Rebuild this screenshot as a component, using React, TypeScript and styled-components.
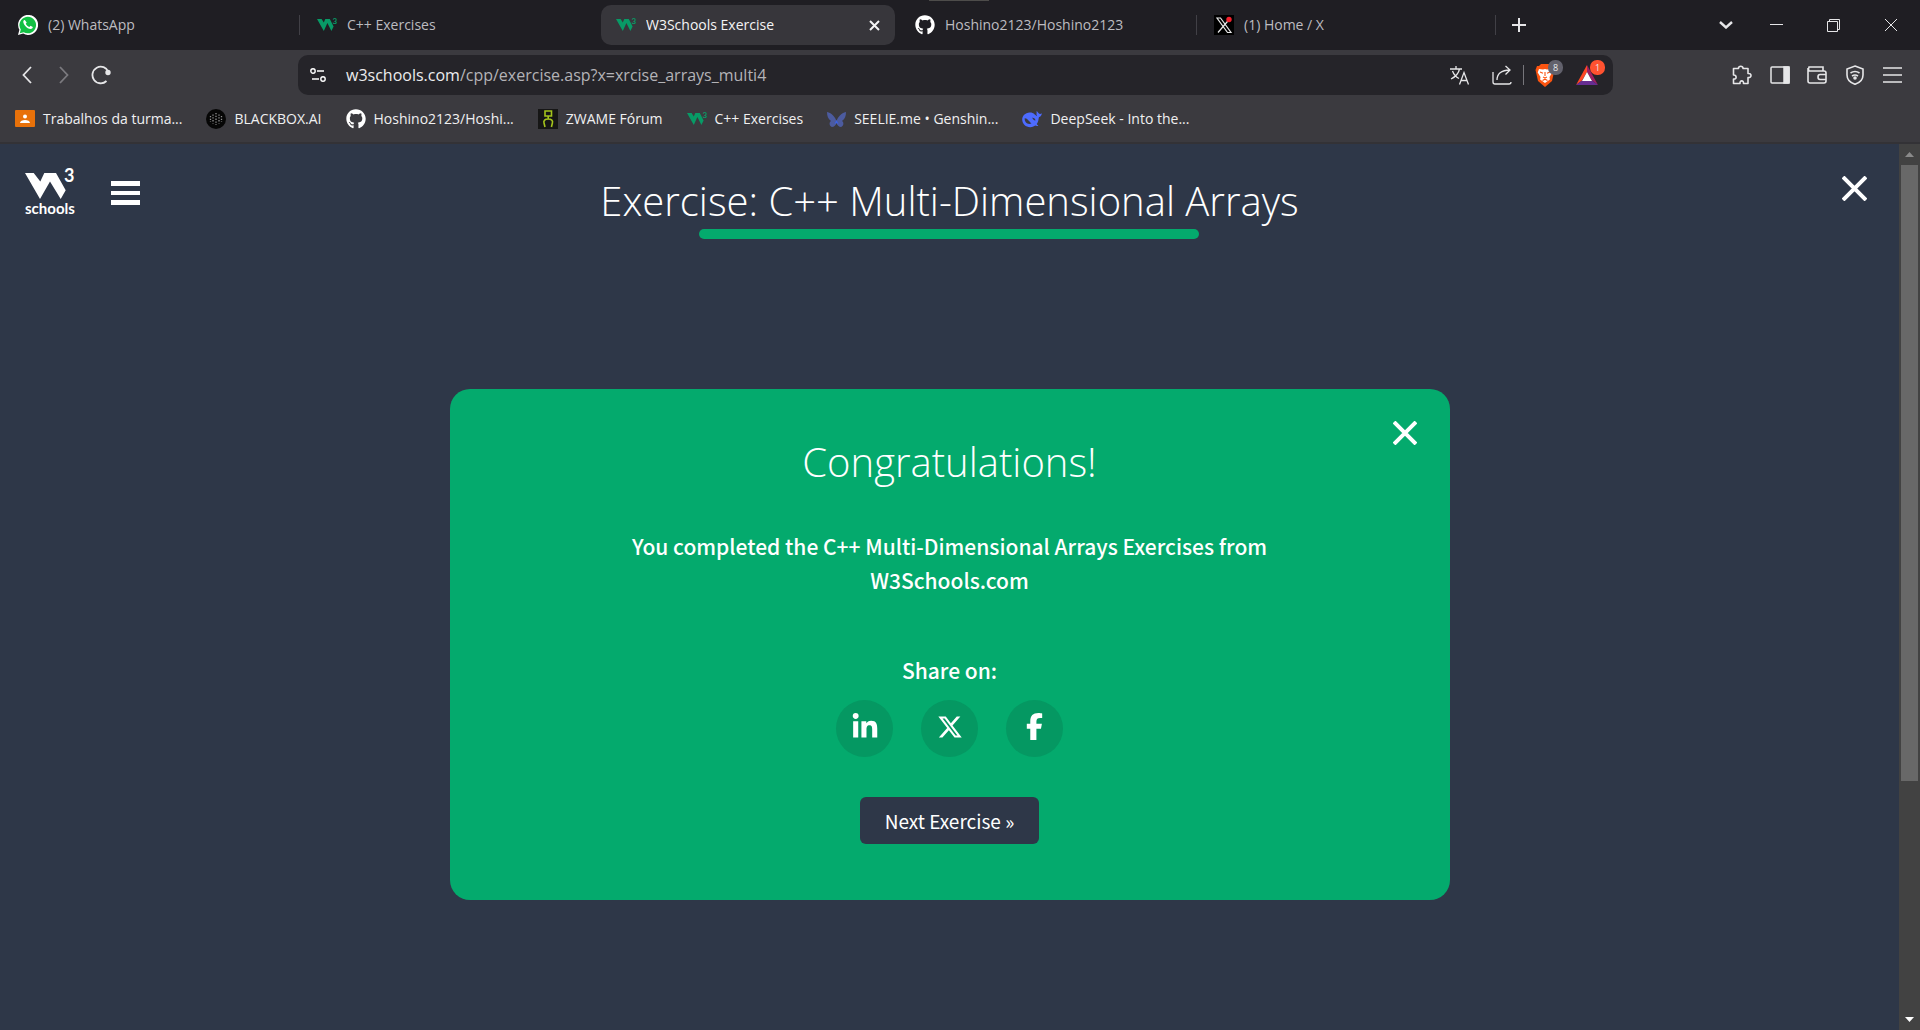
import React from 'react';
import styled, { createGlobalStyle } from 'styled-components';
import { FaGithub, FaLinkedinIn, FaXTwitter, FaFacebookF } from 'react-icons/fa6';

const UI = `'Open Sans', 'Noto Sans', sans-serif`;
const BODY = `'Noto Sans CJK SC', 'Noto Sans', sans-serif`;

const Global = createGlobalStyle`
  *, *::before, *::after { box-sizing: border-box; }
  html, body, #root { height: 100%; }
  body { margin: 0; background: #2e3748; font-family: ${UI}; overflow: hidden; }
  h1, h2, p { margin: 0; }
  button { border: 0; padding: 0; background: none; color: inherit; font: inherit; cursor: pointer; }
  a { color: inherit; text-decoration: none; }
  svg { display: block; flex: none; }
`;

const Window = styled.div`
  display: flex;
  flex-direction: column;
  height: 100vh;
  color: #fff;
`;

const TabStrip = styled.header`
  position: relative;
  display: flex;
  align-items: center;
  height: 50px;
  padding: 0 1px 0 3px;
  background: #1f1e23;
`;

const DragGrip = styled.span`
  position: absolute;
  top: 0;
  left: 50%;
  width: 60px;
  height: 1px;
  margin-left: -31px;
  background: #4d4c4a;
`;

const TabList = styled.nav`
  display: flex;
  align-items: center;
  flex: 0 1 1495px;
  min-width: 0;
`;

const Tab = styled.div<{ $active?: boolean }>`
  display: flex;
  align-items: center;
  flex: 1 1 0;
  min-width: 0;
  height: 40px;
  padding: 0 15px;
  gap: 10px;
  border-radius: 10px;
  background: ${p => (p.$active ? '#37363b' : 'transparent')};
  color: ${p => (p.$active ? '#f4f4f5' : '#bdbcc0')};
`;

const TabTitle = styled.a`
  flex: 1;
  min-width: 0;
  overflow: hidden;
  white-space: nowrap;
  font-size: 14px;
  line-height: 20px;
`;

const TabDivider = styled.span<{ $hidden?: boolean }>`
  flex: none;
  width: 1px;
  height: 20px;
  margin: 0 2px;
  background: ${p => (p.$hidden ? 'transparent' : '#414046')};
`;

const IconButton = styled.button<{ $w: number; $dim?: boolean }>`
  display: flex;
  align-items: center;
  justify-content: center;
  flex: none;
  width: ${p => p.$w}px;
  height: 40px;
  color: ${p => (p.$dim ? '#7b7a7f' : '#e6e6e8')};
`;

const WindowControls = styled.div`
  display: flex;
  margin-left: auto;
`;

const Toolbar = styled.div`
  display: flex;
  align-items: center;
  height: 50px;
  padding: 0 9px 0 8px;
  background: #3b3a3f;
`;

const Side = styled.div<{ $end?: boolean }>`
  display: flex;
  flex: 1 1 ${p => (p.$end ? '8px' : '0')};
  justify-content: ${p => (p.$end ? 'flex-end' : 'flex-start')};
`;

const AddressBar = styled.div`
  display: flex;
  align-items: center;
  flex: 0 1 1315px;
  min-width: 0;
  height: 40px;
  padding: 0 5px 0 12px;
  border-radius: 10px;
  background: #252429;
`;

const UrlField = styled.div`
  flex: 1;
  min-width: 0;
  padding-left: 20px;
  font-size: 16px;
  line-height: 24px;
  white-space: nowrap;
`;

const Url = styled.span`
  color: #b4b3b7;
  b { font-weight: 400; color: #ececee; }
`;

const BarDivider = styled.span`
  width: 1px;
  height: 20px;
  background: #77767b;
`;

const BadgeHost = styled.button`
  position: relative;
  display: flex;
  align-items: center;
  justify-content: center;
  flex: none;
  width: 42px;
  height: 40px;
`;

const Badge = styled.span<{ $color: string }>`
  position: absolute;
  top: 5px;
  right: 3px;
  width: 15px;
  height: 15px;
  border-radius: 7px;
  background: ${p => p.$color};
  color: #e8e8ea;
  font-size: 9px;
  line-height: 15px;
  text-align: center;
`;

const Bookmarks = styled.nav`
  display: flex;
  align-items: center;
  height: 44px;
  padding: 0 15px 4px;
  gap: 24px;
  background: #3b3a3f;
  border-bottom: 2px solid #333236;
`;

const Bookmark = styled.a`
  display: flex;
  align-items: center;
  gap: 8px;
  height: 24px;
  color: #f0f0f1;
  font-size: 14px;
  line-height: 20px;
  white-space: nowrap;
`;

const Viewport = styled.div`
  display: flex;
  flex: 1;
  min-height: 0;
`;

const Page = styled.main`
  display: flex;
  flex-direction: column;
  flex: 1;
  min-width: 0;
  background: #2e3748;
`;

const PageHead = styled.div`
  display: grid;
  grid-template-columns: 1fr auto 1fr;
  align-items: start;
  padding: 18px 24px 0;
`;

const Brand = styled.div`
  display: flex;
  align-items: center;
  gap: 35px;
`;

const CloseButton = styled.button`
  display: flex;
  justify-self: end;
  margin: 14px 8px 0 0;
`;

const TitleBlock = styled.div`
  display: flex;
  flex-direction: column;
  align-items: center;
  padding-top: 11px;
`;

const Title = styled.h1`
  font-weight: 300;
  font-size: 40px;
  line-height: 56px;
  white-space: nowrap;
`;

const Progress = styled.div`
  width: 500px;
  height: 10px;
  border-radius: 5px;
  background: #04aa6d;
`;

const Card = styled.section`
  position: relative;
  display: flex;
  flex-direction: column;
  align-items: center;
  width: 1000px;
  max-width: 90%;
  margin: 150px auto 0;
  padding: 43px 150px 56px;
  border-radius: 20px;
  background: #04aa6d;
  text-align: center;
  font-family: ${BODY};
`;

const CardClose = styled.button`
  position: absolute;
  top: 32px;
  right: 33px;
`;

const CardTitle = styled.h2`
  font-family: ${UI};
  font-weight: 300;
  font-size: 40px;
  line-height: 60px;
`;

const Message = styled.p`
  margin-top: 37px;
  font-size: 21px;
  font-weight: 500;
  line-height: 34px;
`;

const ShareLabel = styled.p`
  margin-top: 56px;
  font-size: 21px;
  font-weight: 500;
  line-height: 34px;
`;

const ShareRow = styled.div`
  display: flex;
  gap: 28px;
  margin-top: 13px;
`;

const ShareLink = styled.a`
  display: flex;
  align-items: center;
  justify-content: center;
  width: 57px;
  height: 57px;
  padding-bottom: 4px;
  border-radius: 50%;
  background: #059862;
`;

const NextButton = styled.button`
  height: 47px;
  margin-top: 40px;
  padding: 0 25px;
  border-radius: 6px;
  background: #2e3748;
  font-size: 19px;
  line-height: 47px;
`;

const Scrollbar = styled.div`
  display: flex;
  flex-direction: column;
  align-items: center;
  width: 21px;
  background: #424242;
`;

const ScrollArrow = styled.button<{ $down?: boolean }>`
  display: flex;
  align-items: center;
  justify-content: center;
  width: 21px;
  height: 21px;
  color: ${p => (p.$down ? '#fff' : '#8a8a8a')};
`;

const ScrollTrack = styled.div`
  display: flex;
  flex: 1;
  width: 17px;
  align-items: flex-start;
`;

const ScrollThumb = styled.div`
  width: 17px;
  height: 73%;
  background: #686868;
`;

const W3Small = () => (
  <svg width="20" height="20" viewBox="0 0 20 20" aria-hidden="true">
    <path d="M0 4h4.600l2.200 3.600L8.300 4h4.500l3.800 7.500-2.200 4.500-4-8-3.600 8z" fill="#089a66" />
    <text x="15.400" y="9" fontFamily="Lato, sans-serif" fontWeight="700" fontSize="8" fill="#089a66">3</text>
  </svg>
);

const W3Logo = () => (
  <svg width="52" height="62" viewBox="0 -4 52 62" role="img" aria-label="W3Schools">
    <path d="M1 7H9.700L16.300 15.500 20.300 7H32L41.700 24.300 36.700 33 26 15.500 16 33z" fill="#fff" />
    <text x="40" y="16" fontFamily="Lato, sans-serif" fontWeight="700" fontSize="18" fill="#fff">3</text>
    <text x="1" y="48" fontFamily="Lato, sans-serif" fontWeight="700" fontSize="15" fill="#fff">schools</text>
  </svg>
);

const Cross = ({ size, stroke }: { size: number; stroke: number }) => (
  <svg width={size} height={size} viewBox={`0 0 ${size} ${size}`} stroke="currentColor" strokeWidth={stroke} aria-hidden="true">
    <path d={`M1 1L${size - 1} ${size - 1}M${size - 1} 1L1 ${size - 1}`} />
  </svg>
);

const WhatsAppIcon = () => (
  <svg width="20" height="20" viewBox="0 0 20 20" aria-hidden="true">
    <path d="M0 20l1.400-5.200A10 10 0 1 1 5.200 18.600z" fill="#fff" />
    <path d="M1.800 18.200l1-3.600a8.300 8.300 0 1 1 2.900 2.700z" fill="#12c043" />
    <path d="M7 5.200c-.5-.4-1.300.1-1.600.8-1 2.500 3.700 8.100 7.200 8.100 1.100 0 2.300-.9 2.200-2l-2.300-1.300-1.100 1.200c-1.600-.4-3-1.800-3.600-3.300l.9-1.200z" fill="#fff" />
  </svg>
);

const XIcon = () => (
  <svg width="20" height="20" viewBox="0 0 20 20" aria-hidden="true">
    <rect width="20" height="20" fill="#000" />
    <path d="M3 3h3.500L17 17.500h-3.500zM16 3.500L4 17.500" fill="none" stroke="#e8e8e8" strokeWidth="1.200" />
    <circle cx="15" cy="4.500" r="2.700" fill="#f4212e" />
  </svg>
);

const ClassroomIcon = () => (
  <svg width="20" height="20" viewBox="0 0 20 20" aria-hidden="true">
    <rect y="1" width="20" height="17" rx="1" fill="#e8710a" />
    <circle cx="10" cy="7.500" r="2" fill="#fff" />
    <path d="M5 14c0-4 10-4 10 0z" fill="#fff" />
  </svg>
);

const BlackboxIcon = () => (
  <svg width="20" height="20" viewBox="0 0 20 20" aria-hidden="true">
    <circle cx="10" cy="10" r="10" fill="#060606" />
    <g fill="none" stroke="#8f8f8f" strokeWidth="1.300" strokeDasharray="1.300 1.500">
      <path d="M10 4v12M7 5.500v9M13 5.500v9M4.500 7v6M15.500 7v6" />
    </g>
  </svg>
);

const ZwameIcon = () => (
  <svg width="20" height="20" viewBox="0 0 20 20" aria-hidden="true">
    <rect width="20" height="20" fill="#161616" />
    <path d="M7 2h6.500v5H7zM10.200 7v3M7 18l-1-4c-.8-2.500 1-4 4.200-4s5 1.500 4.200 4l-1 4" fill="none" stroke="#a4c41c" strokeWidth="1.600" />
  </svg>
);

const SeelieIcon = () => (
  <svg width="19" height="20" viewBox="0 0 19 20" aria-hidden="true">
    <path d="M0 3c5 1 8 5 9.500 9C11 8 14 4 19 3c0 4-1 7-4 9 2 1 2 5-1 6-2 0-4-2-4.500-4-.5 2-2.500 4-4.500 4-3-1-3-5-1-6C1 10 0 7 0 3z" fill="#4c5b9f" />
    <path d="M9.500 11l2 4-2-1-2 1z" fill="#3b63e6" />
  </svg>
);

const DeepSeekIcon = () => (
  <svg width="20" height="20" viewBox="0 0 20 20" aria-hidden="true">
    <path d="M19.800 4.300c-1.200.8-1.800.6-2.600.4-1.200-.6-1-2-2.600-2.700.3 2.200-.7 3.400.6 5.200-2.800-1.400-3.700-4-7.500-3.700C3 3.800.2 7 .2 10.500c0 4.400 3.500 7.700 8 7.700 2.600 0 4-.8 5.100-1.600 1.300.5 2.700.4 3-.2-.8-.3-1.400-.7-1.600-1.300 2-2.400 1.600-4.900 2.300-7 1.600-.3 2.700-1.600 2.800-3.800zM9.500 14.500C7 12.500 5.400 9 2.700 9.300 2.300 13 5.500 16 9.500 14.500zm4-3c-.3-2-1.500-3-3.500-2.800 1 1 1.300 2.800 3.500 2.800z" fill="#4d6bfe" fillRule="evenodd" />
  </svg>
);

const BraveIcon = () => (
  <svg width="20" height="23" viewBox="0 0 20 23" aria-hidden="true">
    <path d="M6 0h8l2 2h2l1.500 4L19 8l-2 9-7 6-7-6L1 8 .5 6 2 2h2z" fill="#fb5410" />
    <path d="M4 5l4 .5 2-.6 2 .6 4-.5 1.300 3.500L14.500 13l.4 2.500L10 19l-4.900-3.500.4-2.500-2.800-4.500z" fill="#fff" />
    <path d="M5 8l3 1.200M15 8l-3 1.200M10 8v4M8 13l2 1 2-1M7.500 16.500l2.500-1.300 2.500 1.300" fill="none" stroke="#fb5410" strokeWidth="1.100" />
  </svg>
);

const BatIcon = () => (
  <svg width="22" height="20" viewBox="0 0 22 20" aria-hidden="true">
    <path d="M11 0v7L6 15.500 0 20z" fill="#ff4724" />
    <path d="M11 0l11 20-6-4.500L11 7z" fill="#9e1f63" />
    <path d="M0 20l6-4.500h10l6 4.500z" fill="#662d91" />
    <path d="M11 7l5 9H6z" fill="#fff" />
  </svg>
);

const line = { fill: 'none', stroke: 'currentColor', 'aria-hidden': true } as const;

const tabs = [
  { title: '(2) WhatsApp', icon: <WhatsAppIcon /> },
  { title: 'C++ Exercises', icon: <W3Small />, joined: true },
  { title: 'W3Schools Exercise', icon: <W3Small />, active: true, joined: true },
  { title: 'Hoshino2123/Hoshino2123', icon: <FaGithub size={20} color="#fff" /> },
  { title: '(1) Home / X', icon: <XIcon /> },
];

const bookmarks = [
  { title: 'Trabalhos da turma...', icon: <ClassroomIcon /> },
  { title: 'BLACKBOX.AI', icon: <BlackboxIcon /> },
  { title: 'Hoshino2123/Hoshi...', icon: <FaGithub size={20} color="#fff" /> },
  { title: 'ZWAME Fórum', icon: <ZwameIcon /> },
  { title: 'C++ Exercises', icon: <W3Small /> },
  { title: 'SEELIE.me • Genshin...', icon: <SeelieIcon /> },
  { title: 'DeepSeek - Into the...', icon: <DeepSeekIcon /> },
];

export default function App() {
  return (
    <Window>
      <Global />
      <TabStrip>
        <DragGrip />
        <TabList aria-label="Tabs">
          {tabs.map(t => (
            <React.Fragment key={t.title}>
              <Tab $active={t.active}>
                {t.icon}
                <TabTitle href="#">{t.title}</TabTitle>
                {t.active && (
                  <button aria-label="Close tab"><Cross size={11} stroke={2} /></button>
                )}
              </Tab>
              <TabDivider $hidden={t.joined} />
            </React.Fragment>
          ))}
        </TabList>
        <IconButton $w={42} aria-label="New tab">
          <svg {...line} width="14" height="14" viewBox="0 0 14 14" strokeWidth="2"><path d="M7 0v14M0 7h14" /></svg>
        </IconButton>
        <WindowControls>
          <IconButton $w={44} aria-label="Search tabs">
            <svg {...line} width="14" height="8" viewBox="0 0 14 8" strokeWidth="2.400"><path d="M1 1l6 5.500L13 1" /></svg>
          </IconButton>
          <IconButton $w={57} aria-label="Minimize">
            <svg {...line} width="13" height="3" viewBox="0 0 13 3"><path d="M0 .5h13" /></svg>
          </IconButton>
          <IconButton $w={57} aria-label="Restore">
            <svg {...line} width="13" height="13" viewBox="0 0 13 13"><path d="M.5 2.500h10v10H.5zM2.500 2.500v-2h10v10h-2" /></svg>
          </IconButton>
          <IconButton $w={57} aria-label="Close window">
            <Cross size={14} stroke={1} />
          </IconButton>
        </WindowControls>
      </TabStrip>

      <Toolbar>
        <Side>
          <IconButton $w={37} aria-label="Back">
            <svg {...line} width="10" height="18" viewBox="0 0 10 18" strokeWidth="1.800"><path d="M9 1L1.500 9 9 17" /></svg>
          </IconButton>
          <IconButton $w={37} $dim aria-label="Forward">
            <svg {...line} width="10" height="18" viewBox="0 0 10 18" strokeWidth="1.800"><path d="M1 1l7.500 8L1 17" /></svg>
          </IconButton>
          <IconButton $w={38} aria-label="Reload">
            <svg {...line} width="20" height="20" viewBox="0 0 20 20" strokeWidth="1.800">
              <path d="M15.500 16A8.300 8.300 0 1 1 17.500 7" /><circle cx="17" cy="7.500" r="1.800" fill="currentColor" />
            </svg>
          </IconButton>
        </Side>
        <AddressBar>
          <button aria-label="Site settings">
            <svg {...line} width="16" height="16" viewBox="0 0 16 16" strokeWidth="1.400">
              <circle cx="3" cy="4" r="2.200" /><path d="M7 4h7M2 12h7" /><circle cx="13" cy="12" r="2.200" />
            </svg>
          </button>
          <UrlField>
            <Url><b>w3schools.com</b>/cpp/exercise.asp?x=xrcise_arrays_multi4</Url>
          </UrlField>
          <IconButton $w={42} aria-label="Translate">
            <svg {...line} width="20" height="19" viewBox="0 0 20 19" strokeWidth="1.300">
              <path d="M0 3h12M6 0v3M9.500 3C8.500 8 5 11 1 13M2.500 5C4 9 6 11 9 12.500M9.500 18.500L14 6.500l4.500 12M11 14.500h6" />
            </svg>
          </IconButton>
          <IconButton $w={42} aria-label="Share">
            <svg {...line} width="20" height="20" viewBox="0 0 20 20" strokeWidth="1.300">
              <path d="M1 7v10q0 2 2 2h14q2 0 2-2M5 15c0-6 4-10 13-10M13.500 1L18 5l-4.500 4.500" />
            </svg>
          </IconButton>
          <BarDivider />
          <BadgeHost aria-label="Brave Shields">
            <BraveIcon />
            <Badge $color="#62616c">8</Badge>
          </BadgeHost>
          <BadgeHost aria-label="Brave Rewards">
            <BatIcon />
            <Badge $color="#ff5230">1</Badge>
          </BadgeHost>
        </AddressBar>
        <Side $end>
          <IconButton $w={38} aria-label="Extensions">
            <svg {...line} width="20" height="20" viewBox="0 0 20 20" strokeWidth="1.600">
              <path d="M1.500 3.500h5C6 .5 11.500.5 11 3.500h5v5c4-.5 4 4.500 0 4V18.500h-4.500c.5-3.500-4-3.500-3.500 0H1.500V14c3.500.5 3.500-4 0-4z" strokeLinejoin="round" />
            </svg>
          </IconButton>
          <IconButton $w={37} aria-label="Side panel">
            <svg {...line} width="20" height="18" viewBox="0 0 20 18" strokeWidth="1.500">
              <rect x="1" y="1" width="18" height="16" rx="1" /><path d="M14 1h5v16h-5z" fill="currentColor" />
            </svg>
          </IconButton>
          <IconButton $w={38} aria-label="Wallet">
            <svg {...line} width="20" height="18" viewBox="0 0 20 18" strokeWidth="1.600">
              <path d="M1 2v13q0 2 2 2h14q2 0 2-2V7q0-2-2-2H2q-1-1.500 0-4h14v4M19 8.500h-6q-2 0-2 2.500t2 2.500h6" />
            </svg>
          </IconButton>
          <IconButton $w={37} aria-label="VPN">
            <svg {...line} width="18" height="20" viewBox="0 0 18 20" strokeWidth="1.600">
              <path d="M9 1l8 3v6c0 5-4 8-8 9.300C5 18 1 15 1 10V4zM4.500 8q4.500-3 9 0M6 11q3-2 6 0" /><circle cx="9" cy="13" r="1" fill="currentColor" />
            </svg>
          </IconButton>
          <IconButton $w={38} aria-label="Menu">
            <svg {...line} width="19" height="16" viewBox="0 0 19 16" strokeWidth="1.700"><path d="M0 1h19M0 8h19M0 15h19" /></svg>
          </IconButton>
        </Side>
      </Toolbar>

      <Bookmarks aria-label="Bookmarks">
        {bookmarks.map(b => (
          <Bookmark key={b.title} href="#">{b.icon}<span>{b.title}</span></Bookmark>
        ))}
      </Bookmarks>

      <Viewport>
        <Page>
          <PageHead>
            <Brand>
              <a href="#" aria-label="W3Schools home"><W3Logo /></a>
              <button aria-label="Open menu">
                <svg width="29" height="24" viewBox="0 0 29 24" fill="#fff" aria-hidden="true">
                  <path d="M0 0h29v5H0zM0 10h29v4H0zM0 19h29v5H0z" />
                </svg>
              </button>
            </Brand>
            <TitleBlock>
              <Title>Exercise: C++ Multi-Dimensional Arrays</Title>
              <Progress role="progressbar" aria-valuenow={100} aria-label="Exercise progress" />
            </TitleBlock>
            <CloseButton aria-label="Close exercise"><Cross size={25} stroke={4} /></CloseButton>
          </PageHead>
          <Card>
            <CardClose aria-label="Close message"><Cross size={24} stroke={4} /></CardClose>
            <CardTitle>Congratulations!</CardTitle>
            <Message>You completed the C++ Multi-Dimensional Arrays Exercises from W3Schools.com</Message>
            <ShareLabel>Share on:</ShareLabel>
            <ShareRow>
              <ShareLink href="#" aria-label="LinkedIn"><FaLinkedinIn size={28} /></ShareLink>
              <ShareLink href="#" aria-label="X"><FaXTwitter size={26} /></ShareLink>
              <ShareLink href="#" aria-label="Facebook"><FaFacebookF size={27} /></ShareLink>
            </ShareRow>
            <NextButton>Next Exercise »</NextButton>
          </Card>
        </Page>
        <Scrollbar>
          <ScrollArrow aria-label="Scroll up">
            <svg width="9" height="5" viewBox="0 0 9 5" fill="currentColor" aria-hidden="true"><path d="M4.500 0L9 5H0z" /></svg>
          </ScrollArrow>
          <ScrollTrack><ScrollThumb /></ScrollTrack>
          <ScrollArrow $down aria-label="Scroll down">
            <svg width="9" height="5" viewBox="0 0 9 5" fill="currentColor" aria-hidden="true"><path d="M4.500 5L9 0H0z" /></svg>
          </ScrollArrow>
        </Scrollbar>
      </Viewport>
    </Window>
  );
}
